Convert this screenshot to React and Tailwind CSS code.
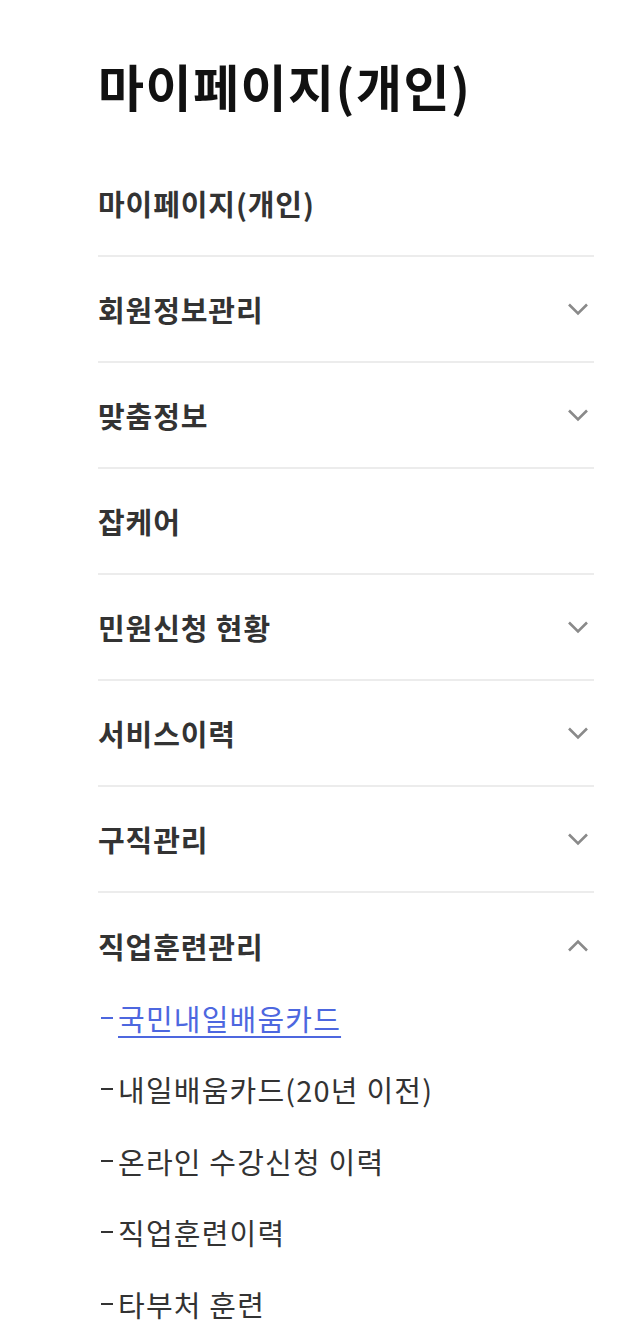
import React, { useState } from 'react';

const menus = [
  { label: '마이페이지(개인)', sub: false },
  { label: '회원정보관리', sub: true },
  { label: '맞춤정보', sub: true },
  { label: '잡케어', sub: false },
  { label: '민원신청 현황', sub: true },
  { label: '서비스이력', sub: true },
  { label: '구직관리', sub: true },
];

const trainingLinks = [
  '국민내일배움카드',
  '내일배움카드(20년 이전)',
  '온라인 수강신청 이력',
  '직업훈련이력',
  '타부처 훈련',
];

const Chevron = ({ up }) => (
  <svg width="22" height="13" viewBox="0 0 22 13" fill="none" className="text-[#8a8a8a]">
    <path
      d={up ? 'M2 11.5L11 2.5L20 11.5' : 'M2 1.5L11 10.5L20 1.5'}
      stroke="currentColor"
      strokeWidth="2.6"
      strokeLinecap="butt"
      strokeLinejoin="miter"
    />
  </svg>
);

export default function App() {
  const [active] = useState(0);

  return (
    <div className="min-h-[1331px] bg-white font-['Noto_Sans_CJK_KR','Noto_Sans',sans-serif]">
      <div className="ml-[98px] w-[496px] pt-[55px]">
        {/* Page title */}
        <h1 className="text-[50px] font-bold leading-[60px] tracking-[1.5px] text-[#111]">
          마이페이지(개인)
        </h1>

        <ul className="mt-[36px]">
          {menus.map((m) => (
            <li
              key={m.label}
              className="flex h-[106px] items-center justify-between border-b-2 border-[#ececec]"
            >
              <span className="text-[29px] font-bold leading-[36px] tracking-[0.9px] text-[#333]">
                {m.label}
              </span>
              {m.sub && (
                <span className="mr-[5px]">
                  <Chevron />
                </span>
              )}
            </li>
          ))}

          {/* Expanded group */}
          <li>
            <div className="flex h-[89px] items-start justify-between pt-[35px]">
              <span className="text-[29px] font-bold leading-[36px] tracking-[0.9px] text-[#333]">
                직업훈련관리
              </span>
              <span className="mr-[5px] mt-[11px]">
                <Chevron up />
              </span>
            </div>
            <ul>
              {trainingLinks.map((t, i) => (
                <li
                  key={t}
                  className={`flex h-[71.5px] items-center text-[29px] leading-[36px] tracking-[1.2px] ${
                    i === active ? 'text-[#4d67df]' : 'text-[#333]'
                  }`}
                >
                  <span className="ml-[3px] mr-[5px] inline-block h-[2px] w-[12px] bg-current" />
                  <a
                    href="#"
                    className={
                      i === active
                        ? 'underline decoration-2 underline-offset-[5px]'
                        : ''
                    }
                  >
                    {t}
                  </a>
                </li>
              ))}
            </ul>
          </li>
        </ul>
      </div>
    </div>
  );
}
